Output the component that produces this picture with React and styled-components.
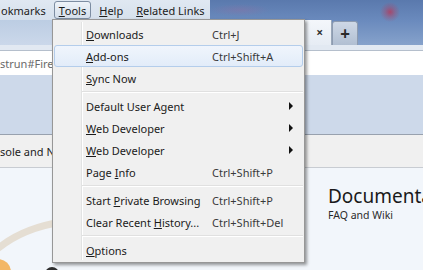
import React from 'react'
import styled, { createGlobalStyle } from 'styled-components'

const GlobalStyle = createGlobalStyle`
  html, body {
    margin: 0;
    padding: 0;
  }
  body {
    width: 423px;
    height: 270px;
    overflow: hidden;
    background: #f2f6fb;
    font-family: "Noto Sans", "DejaVu Sans", sans-serif;
    font-size: 11px;
    color: #1e1e1e;
  }
`

const Window = styled.div`
  position: relative;
  width: 423px;
  height: 270px;
  overflow: hidden;
  display: flex;
  flex-direction: column;
`

const Header = styled.div`
  height: 45px;
  display: flex;
  flex-direction: column;
  background:
    radial-gradient(circle at 390px 12px, rgba(176, 62, 96, 0.85) 0, rgba(176, 62, 96, 0.35) 5px, rgba(176, 62, 96, 0) 10px),
    radial-gradient(ellipse 30px 6px at 240px 10px, rgba(150, 110, 160, 0.35), rgba(150, 110, 160, 0)),
    linear-gradient(180deg, #5a79ad 0%, #6a8abd 45%, #86a2cb 100%);
`

const MenuBar = styled.div`
  width: 210px;
  height: 20px;
  display: flex;
  align-items: center;
  gap: 3px;
  background: linear-gradient(180deg, #e0e8f2 0%, #d6e0ec 100%);
`

const MenuTitle = styled.div`
  height: 18px;
  box-sizing: border-box;
  padding: ${({ $first }) => ($first ? '0 4px 0 0' : '0 4px')};
  display: flex;
  align-items: center;
  border: 1px solid ${({ $open }) => ($open ? '#7d8da2' : 'transparent')};
  border-radius: 3px;
  background: ${({ $open }) => ($open ? 'linear-gradient(180deg, #eef3f9 0%, #d5dfeb 100%)' : 'none')};
  font-size: 11px;
  color: #1b1b1b;
  white-space: nowrap;
  u {
    text-underline-offset: 1px;
  }
`

const TabRow = styled.div`
  height: 25px;
  display: flex;
  align-items: flex-end;
`

const InactiveTab = styled.div`
  width: 252px;
  height: 25px;
  background: linear-gradient(180deg, #bccde3 0%, #cbd8ea 100%);
`

const ActiveTab = styled.div`
  width: 80px;
  height: 25px;
  box-sizing: border-box;
  display: flex;
  align-items: center;
  justify-content: flex-end;
  padding-right: 8px;
  border-right: 1px solid #9aa8ba;
  background: linear-gradient(180deg, #f4f7fb 0%, #e6ecf4 100%);
  font-size: 12px;
  font-weight: bold;
  color: #333;
`

const NewTab = styled.div`
  width: 26px;
  height: 24px;
  box-sizing: border-box;
  display: flex;
  align-items: center;
  justify-content: center;
  border: 1px solid #8d9bb0;
  border-bottom: none;
  border-radius: 3px 3px 0 0;
  background: linear-gradient(180deg, #ced8e6 0%, #b1bfd2 100%);
  font-size: 17px;
  font-weight: bold;
  color: #2a2a2a;
`

const ToolStrip = styled.div`
  height: 5px;
  background: #e2e9f2;
  border-bottom: 1px solid #b5bfcc;
`

const UrlRow = styled.div`
  height: 24px;
  display: flex;
  align-items: center;
  background: #fff;
  font-size: 11px;
  color: #6a6a6a;
  white-space: nowrap;
`

const BlueBand = styled.div`
  height: 59px;
  background: #cdd9ea;
  border-bottom: 1px solid #98a1ae;
`

const GrayBar = styled.div`
  height: 32px;
  display: flex;
  align-items: center;
  background: #f0f0f0;
  border-bottom: 1px solid #c8ccd2;
  font-size: 11px;
  color: #222;
  white-space: nowrap;
`

const Content = styled.div`
  flex: 1;
  display: grid;
  grid-template-columns: 328px 1fr;
  background: #f2f6fb;
`

const Decor = styled.svg`
  display: block;
  align-self: end;
`

const Docs = styled.div`
  padding-top: 16px;
  white-space: nowrap;
  h2 {
    margin: 0;
    font-size: 19px;
    font-weight: normal;
    line-height: 24px;
    color: #1a1a1a;
  }
  p {
    margin: 0;
    font-size: 10.5px;
    line-height: 14px;
    color: #2a2a2a;
  }
`

const Menu = styled.div`
  position: absolute;
  left: 52px;
  top: 19px;
  width: 253px;
  box-sizing: border-box;
  padding: 3px 1px 1px;
  border: 1px solid #979797;
  background: #f0f0f0;
  box-shadow: 2px 2px 3px rgba(0, 0, 0, 0.4);
  &::before {
    content: '';
    position: absolute;
    top: 2px;
    bottom: 2px;
    left: 28px;
    width: 1px;
    background: #e2e3e3;
    border-right: 1px solid #fff;
  }
`

const Item = styled.div`
  position: relative;
  height: 22px;
  box-sizing: border-box;
  display: grid;
  grid-template-columns: 31px 126px 1fr 20px;
  align-items: center;
  border: 1px solid ${({ $hover }) => ($hover ? '#b4cdeb' : 'transparent')};
  border-radius: 3px;
  background: ${({ $hover }) => ($hover ? 'linear-gradient(180deg, #f0f5fc 0%, #e2ecf9 100%)' : 'none')};
  white-space: nowrap;
  u {
    text-underline-offset: 1px;
  }
`

const Label = styled.span`
  grid-column: 2;
  color: #1b1b1b;
`

const Shortcut = styled.span`
  grid-column: 3;
  color: #3a3a3a;
`

const Arrow = styled.span`
  grid-column: 4;
  width: 0;
  height: 0;
  margin-left: 7px;
  border-top: 4px solid transparent;
  border-bottom: 4px solid transparent;
  border-left: 4px solid #111;
`

const Separator = styled.div`
  position: relative;
  height: 6px;
  margin-left: 28px;
  &::after {
    content: '';
    position: absolute;
    left: 0;
    right: 0;
    top: 2px;
    height: 1px;
    background: #e0e0e0;
    border-bottom: 1px solid #fff;
  }
`

const items = [
  { label: <><u>D</u>ownloads</>, key: 'Ctrl+J' },
  { label: <><u>A</u>dd-ons</>, key: 'Ctrl+Shift+A', hover: true },
  { label: <><u>S</u>ync Now</> },
  'sep',
  { label: 'Default User Agent', sub: true },
  { label: <><u>W</u>eb Developer</>, sub: true },
  { label: <><u>W</u>eb Developer</>, sub: true },
  { label: <>Page <u>I</u>nfo</>, key: 'Ctrl+Shift+P' },
  'sep',
  { label: <>Start <u>P</u>rivate Browsing</>, key: 'Ctrl+Shift+P' },
  { label: <>Clear Recent <u>H</u>istory...</>, key: 'Ctrl+Shift+Del' },
  'sep',
  { label: <><u>O</u>ptions</> },
]

const App = () => {
  return (
    <Window>
      <GlobalStyle />
      <Header>
        <MenuBar>
          <MenuTitle $first>okmarks</MenuTitle>
          <MenuTitle $open><u>T</u>ools</MenuTitle>
          <MenuTitle><u>H</u>elp</MenuTitle>
          <MenuTitle><u>R</u>elated Links</MenuTitle>
        </MenuBar>
        <TabRow>
          <InactiveTab />
          <ActiveTab>×</ActiveTab>
          <NewTab>+</NewTab>
        </TabRow>
      </Header>
      <ToolStrip />
      <UrlRow>strun#Firebug</UrlRow>
      <BlueBand />
      <GrayBar>sole and Net</GrayBar>
      <Content>
        <Decor width="328" height="102" viewBox="0 0 328 102">
          <path d="M -4 82 Q 22 60 62 54" fill="none" stroke="#e5ded3" strokeWidth="7" />
          <circle cx="-2" cy="104" r="13" fill="#f3b766" />
          <circle cx="52" cy="106" r="7" fill="#2e2e2e" />
        </Decor>
        <Docs>
          <h2>Documentation</h2>
          <p>FAQ and Wiki</p>
        </Docs>
      </Content>
      <Menu>
        {items.map((it, i) =>
          it === 'sep' ? (
            <Separator key={i} />
          ) : (
            <Item key={i} $hover={it.hover}>
              <Label>{it.label}</Label>
              {it.key && <Shortcut>{it.key}</Shortcut>}
              {it.sub && <Arrow />}
            </Item>
          )
        )}
      </Menu>
    </Window>
  )
}

export default App
